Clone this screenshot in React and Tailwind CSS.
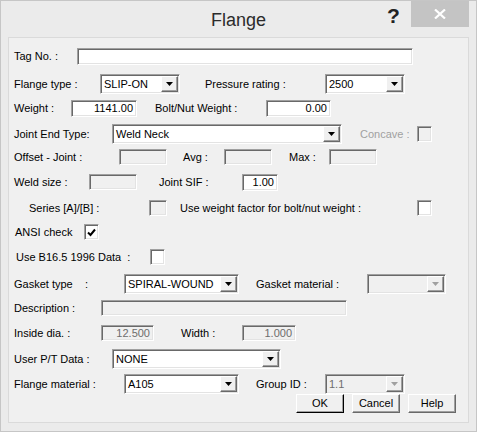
import clsx from "clsx";

// classic Win32 3D edges
const sunken =
  "border border-t-[#a0a0a0] border-l-[#a0a0a0] border-b-white border-r-white shadow-[inset_1px_1px_0_#696969,inset_-1px_-1px_0_#e3e3e3]";
const raised =
  "border border-t-white border-l-white border-b-[#696969] border-r-[#696969] shadow-[inset_-1px_-1px_0_#a0a0a0]";

function Label({ className, children }) {
  return <span className={clsx("shrink-0 whitespace-nowrap", className)}>{children}</span>;
}

function Edit({ className, value, disabled, right }) {
  return (
    <div
      className={clsx(
        "flex shrink-0 items-center px-[3px] leading-none",
        sunken,
        disabled ? "bg-[#f0f0f0] text-[#6d6d6d]" : "bg-white text-black",
        right && "justify-end",
        className
      )}
    >
      {value}
    </div>
  );
}

function Combo({ className, value, disabled }) {
  return (
    <div
      className={clsx(
        "flex h-[20px] shrink-0 items-stretch p-[1px]",
        sunken,
        disabled ? "bg-[#f0f0f0] text-[#6d6d6d]" : "bg-white text-black",
        className
      )}
    >
      <span className="flex flex-1 items-center pl-[2px] leading-none whitespace-nowrap overflow-hidden">
        {value}
      </span>
      <span className={clsx("flex w-[17px] items-center justify-center bg-[#f0f0f0]", raised)}>
        <svg width="7" height="4" viewBox="0 0 7 4">
          <path d="M0 0h7L3.5 4z" fill={disabled ? "#a0a0a0" : "#000"} />
        </svg>
      </span>
    </div>
  );
}

function Check({ className, checked, disabled }) {
  return (
    <div
      className={clsx(
        "flex h-[16px] w-[15px] shrink-0 items-center justify-center",
        sunken,
        disabled ? "bg-[#f0f0f0]" : "bg-white",
        className
      )}
    >
      {checked && (
        <svg width="9" height="9" viewBox="0 0 9 9">
          <path d="M1 4.5L3.5 7L8 1.5" fill="none" stroke="#000" strokeWidth="2" />
        </svg>
      )}
    </div>
  );
}

function Btn({ children, className }) {
  return (
    <div
      className={clsx(
        "flex h-[19px] w-[48px] shrink-0 items-center justify-center bg-[#f0f0f0] leading-none",
        raised,
        className
      )}
    >
      {children}
    </div>
  );
}

export default function App() {
  return (
    <div className="w-[477px] h-[432px] bg-[#ebebeb] border border-[#c6c6c6] font-['Liberation_Sans',Arial,sans-serif] text-[11px] text-black overflow-hidden">
      {/* --- TITLE BAR --- */}
      <div className="relative h-[36px] pt-[10px] text-center">
        <span className="text-[18px] leading-[18px] text-[#2b2b2b]">Flange</span>
        <span className="absolute left-[386px] top-[4px] text-[21px] leading-[21px] font-bold text-[#222]">?</span>
        <div className="absolute left-[410px] top-[-1px] flex h-[27px] w-[58px] items-center justify-center bg-[#c4c4c4]">
          <svg width="12" height="10" viewBox="0 0 12 10">
            <path d="M1 0.5L11 9.5M11 0.5L1 9.5" stroke="#fff" strokeWidth="2.2" />
          </svg>
        </div>
      </div>

      {/* --- CLIENT PANEL --- */}
      <div className="mx-[7px] h-[386px] w-[461px] border border-[#dadada] bg-[#f0f0f0] pl-[5px]">
        <div className="mt-[8px] flex h-[20px] items-center">
          <Label className="w-[63px]">Tag No. :</Label>
          <Edit className="h-[17px] w-[336px]" />
        </div>

        <div className="mt-[8px] flex h-[20px] items-center">
          <Label className="w-[86px]">Flange type :</Label>
          <Combo className="w-[80px]" value="SLIP-ON" />
          <Label className="w-[145px] pl-[25px]">Pressure rating :</Label>
          <Combo className="w-[80px]" value="2500" />
        </div>

        <div className="mt-[4px] flex h-[20px] items-center">
          <Label className="w-[57px]">Weight :</Label>
          <Edit className="h-[17px] w-[66px]" value="1141.00" right />
          <Label className="w-[129px] pl-[18px]">Bolt/Nut Weight :</Label>
          <Edit className="h-[17px] w-[65px]" value="0.00" right />
        </div>

        <div className="mt-[6px] flex h-[20px] items-center">
          <Label className="w-[98px]">Joint End Type:</Label>
          <Combo className="w-[230px]" value="Weld Neck" />
          <Label className="w-[75px] pl-[18px] text-[#a0a0a0]">Concave :</Label>
          <Check disabled />
        </div>

        <div className="mt-[3px] flex h-[20px] items-center">
          <Label className="w-[105px]">Offset - Joint :</Label>
          <Edit className="h-[16px] w-[48px]" disabled />
          <Label className="w-[57px] pl-[16px]">Avg :</Label>
          <Edit className="h-[16px] w-[48px]" disabled />
          <Label className="w-[57px] pl-[17px]">Max :</Label>
          <Edit className="h-[16px] w-[48px]" disabled />
        </div>

        <div className="mt-[5px] flex h-[20px] items-center">
          <Label className="w-[75px]">Weld size :</Label>
          <Edit className="h-[16px] w-[48px]" disabled />
          <Label className="w-[105px] pl-[22px]">Joint SIF :</Label>
          <Edit className="h-[17px] w-[36px]" value="1.00" right />
        </div>

        <div className="mt-[6px] flex h-[20px] items-center">
          <Label className="w-[135px] pl-[15px]">Series [A]/[B] :</Label>
          <Check className="w-[18px]" disabled />
          <Label className="w-[250px] pl-[13px]">Use weight factor for bolt/nut weight :</Label>
          <Check />
        </div>

        <div className="mt-[4px] flex h-[20px] items-center">
          <Label className="w-[70px] pl-[1px]">ANSI check</Label>
          <Check checked />
        </div>

        <div className="mt-[5px] flex h-[20px] items-center">
          <Label className="w-[136px] pl-[2px]">Use B16.5 1996 Data&nbsp;&nbsp;:</Label>
          <Check />
        </div>

        <div className="mt-[7px] flex h-[20px] items-center">
          <Label className="w-[110px]">
            <span className="inline-block w-[71px]">Gasket type</span>:
          </Label>
          <Combo className="w-[115px]" value="SPIRAL-WOUND" />
          <Label className="w-[128px] pl-[17px]">Gasket material :</Label>
          <Combo className="w-[79px]" disabled />
        </div>

        <div className="mt-[4px] flex h-[20px] items-center">
          <Label className="w-[87px]">Description :</Label>
          <Edit className="h-[16px] w-[246px]" disabled />
        </div>

        <div className="mt-[5px] flex h-[20px] items-center">
          <Label className="w-[87px]">Inside dia. :</Label>
          <Edit className="h-[16px] w-[53px]" value="12.500" disabled right />
          <Label className="w-[88px] pl-[27px]">Width :</Label>
          <Edit className="h-[16px] w-[54px]" value="1.000" disabled right />
        </div>

        <div className="mt-[6px] flex h-[20px] items-center">
          <Label className="w-[98px]">User P/T Data :</Label>
          <Combo className="w-[169px]" value="NONE" />
        </div>

        <div className="mt-[5px] flex h-[20px] items-center">
          <Label className="w-[110px]">Flange material :</Label>
          <Combo className="w-[115px]" value="A105" />
          <Label className="w-[86px] pl-[17px]">Group ID :</Label>
          <Combo className="w-[80px]" value="1.1" disabled />
        </div>

        <div className="flex h-[19px] items-center gap-[8px] pl-[282px]">
          <Btn className="border-b-black border-r-black">OK</Btn>
          <Btn>Cancel</Btn>
          <Btn>Help</Btn>
        </div>
      </div>
    </div>
  );
}
